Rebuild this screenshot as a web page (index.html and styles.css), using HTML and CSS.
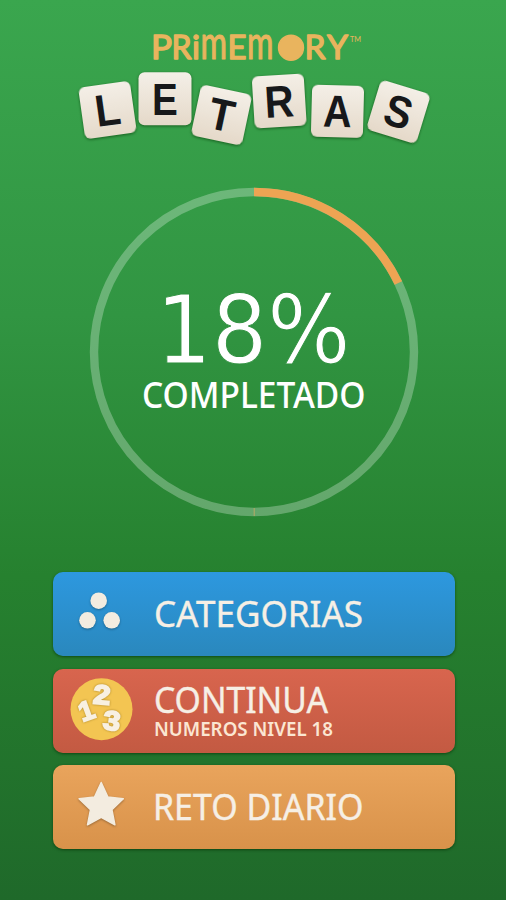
FILE: index.html
```html
<!DOCTYPE html>
<html lang="es">
<head>
<meta charset="UTF-8">
<meta name="viewport" content="width=device-width, initial-scale=1.0">
<title>Primemory Letras</title>
<link rel="stylesheet" href="styles.css">
</head>
<body>

<header class="logo">
    <svg width="506" height="150" viewBox="0 0 506 150">
        <defs>
            <linearGradient id="tile" x1="0" y1="0" x2="0" y2="1">
                <stop offset="0" stop-color="#f4efe7"/>
                <stop offset="1" stop-color="#e5d9c9"/>
            </linearGradient>
        </defs>
        <g class="brand">
            <text x="151" y="59" textLength="21" lengthAdjust="spacingAndGlyphs">P</text>
            <text x="171.5" y="59" textLength="20" lengthAdjust="spacingAndGlyphs">R</text>
            <text x="192" y="59">i</text>
            <text class="brand-m" x="200.5" y="59" textLength="26.5" lengthAdjust="spacingAndGlyphs">m</text>
            <text x="227.5" y="59" textLength="19" lengthAdjust="spacingAndGlyphs">E</text>
            <text class="brand-m" x="247" y="59" textLength="26.5" lengthAdjust="spacingAndGlyphs">m</text>
            <circle cx="291" cy="47.7" r="12.5"/>
            <text x="304.5" y="59" textLength="21" lengthAdjust="spacingAndGlyphs">R</text>
            <text x="327" y="59" textLength="21" lengthAdjust="spacingAndGlyphs">Y</text>
            <text class="brand-tm" x="350" y="41.5" textLength="11" lengthAdjust="spacingAndGlyphs">TM</text>
        </g>
        <g class="tiles">
            <g transform="translate(107.5 110) rotate(-8)">
                <rect x="-26" y="-26" width="52" height="52" rx="6"/>
                <text transform="scale(.92 1)" y="15.5">L</text>
            </g>
            <g transform="translate(165 98.7)">
                <rect x="-26.5" y="-26.5" width="53" height="53" rx="6"/>
                <text transform="scale(.86 1)" y="16.5">E</text>
            </g>
            <g transform="translate(221.5 115) rotate(12)">
                <rect x="-26" y="-26" width="52" height="52" rx="6"/>
                <text transform="scale(.92 1)" y="15.5">T</text>
            </g>
            <g transform="translate(279.2 101) rotate(-3.5)">
                <rect x="-26" y="-26" width="52" height="52" rx="6"/>
                <text transform="scale(.9 1)" y="16">R</text>
            </g>
            <g transform="translate(337.5 111.3) rotate(1.5)">
                <rect x="-26" y="-26" width="52" height="52" rx="6"/>
                <text transform="scale(.88 1)" y="15.5">A</text>
            </g>
            <g transform="translate(398.5 111.8) rotate(17)">
                <rect x="-26" y="-26" width="52" height="52" rx="6"/>
                <text transform="scale(.9 1)" y="15.5">S</text>
            </g>
        </g>
    </svg>
</header>

<div class="progress">
    <svg width="330" height="330" viewBox="0 0 330 330">
        <circle class="ring" cx="165" cy="165" r="160"/>
        <circle class="ring-value" cx="165" cy="165" r="160" pathLength="100" stroke-dasharray="17.9 100" transform="rotate(-90 165 165)"/>
        <path class="ring-mark" d="M165.2 321v8"/>
        <text class="percent" x="67" y="175.5" textLength="194.5" lengthAdjust="spacingAndGlyphs">18%</text>
        <text class="label" x="53" y="221" textLength="223.5" lengthAdjust="spacingAndGlyphs">COMPLETADO</text>
    </svg>
</div>

<nav class="menu">
    <button class="btn blue-btn">
        <svg width="402" height="84" viewBox="0 0 402 84">
            <g class="icon">
                <circle cx="45.7" cy="28.7" r="8.3"/>
                <circle cx="34.5" cy="48.3" r="8.3"/>
                <circle cx="58.7" cy="48.3" r="8.3"/>
            </g>
            <text class="btn-title" x="101" y="54.5" textLength="209" lengthAdjust="spacingAndGlyphs">CATEGORIAS</text>
        </svg>
    </button>
    <button class="btn red-btn">
        <svg width="402" height="84" viewBox="0 0 402 84">
            <circle class="badge" cx="48.5" cy="40.2" r="31"/>
            <g class="digits">
                <text transform="translate(36.5 50.5) rotate(-20)">1</text>
                <text transform="translate(48 35) rotate(5) scale(1.15 1)">2</text>
                <text transform="translate(57.5 61) rotate(8) scale(1.15 1)">3</text>
            </g>
            <text class="btn-title" x="101" y="43.5" textLength="174" lengthAdjust="spacingAndGlyphs">CONTINUA</text>
            <text class="btn-sub" x="101" y="67.2" textLength="179" lengthAdjust="spacingAndGlyphs">NUMEROS NIVEL 18</text>
        </svg>
    </button>
    <button class="btn orange-btn">
        <svg width="402" height="84" viewBox="0 0 402 84">
            <path class="icon star" d="M48.2 17.5l6.6 14.4 15.5 1.9-11.4 10.8 3 15.2-13.7-7.4-13.7 7.4 3-15.2-11.4-10.8 15.5-1.9z"/>
            <text class="btn-title" x="100" y="54.5" textLength="210.5" lengthAdjust="spacingAndGlyphs">RETO DIARIO</text>
        </svg>
    </button>
</nav>

</body>
</html>
```
FILE: styles.css
```css
html {
    background: #1f692a;
}
body {
    margin: 0;
    width: 506px;
    height: 900px;
    overflow: hidden;
    background: linear-gradient(#3aa64e, #319542 35%, #26812f 64%, #1f692a);
    font-family: "Noto Sans", sans-serif;
}
svg {
    display: block;
}
.logo {
    height: 150px;
}
.brand {
    fill: #e9b45e;
    stroke: #e9b45e;
    stroke-width: 1.4;
    stroke-linejoin: round;
    font-family: Lato, sans-serif;
    font-size: 33px;
    font-weight: 400;
}
.brand-m {
    font-size: 46px;
    stroke-width: 1.1;
}
.brand-tm {
    font-size: 8px;
    stroke: none;
}
.tiles {
    font-family: "Liberation Sans", sans-serif;
    font-size: 45px;
    font-weight: bold;
    text-anchor: middle;
    fill: #17181a;
}
.tiles rect {
    fill: url(#tile);
    filter: drop-shadow(0 1px 1.5px rgba(0, 50, 0, 0.6));
}
.progress {
    width: 330px;
    margin: 37px 0 0 88.7px;
}
.ring, .ring-value {
    fill: none;
    stroke: rgba(255, 255, 255, 0.28);
    stroke-width: 8.4;
}
.ring-value {
    stroke: #eda453;
}
.ring-mark {
    stroke: #b9a865;
    stroke-width: 1;
}
.percent {
    font-family: "DejaVu Sans", sans-serif;
    font-size: 94px;
    fill: #fff;
    stroke: #2f913f; /* thins the digits */
    stroke-width: 1;
}
.label {
    font-size: 35.5px;
    font-weight: 500;
    fill: #fff;
}
.menu {
    display: flex;
    flex-direction: column;
    gap: 12.5px;
    width: 402px;
    margin: 55px 0 0 52.5px;
}
.btn {
    display: block;
    width: 402px;
    height: 84px;
    padding: 0;
    border: none;
    border-radius: 10px;
    font-family: inherit;
    box-shadow: 0 1px 3px rgba(0, 40, 0, 0.6);
    cursor: pointer;
}
.blue-btn {
    background: linear-gradient(#2d98df, #2a88bd);
}
.red-btn {
    background: linear-gradient(#d8654e, #c35a42);
}
.orange-btn {
    background: linear-gradient(#e9a45c, #d8924a);
}
.icon {
    fill: #f3ece0;
    filter: drop-shadow(0 1px 1px rgba(0, 0, 0, 0.3));
}
.star {
    stroke: #f3ece0;
    stroke-width: 1.5;
    stroke-linejoin: round;
}
.badge {
    fill: #f3c552;
}
.digits {
    font-family: "Liberation Sans", sans-serif;
    font-size: 27px;
    font-weight: bold;
    text-anchor: middle;
    fill: #f8f0e2;
    stroke: #f8f0e2;
    stroke-width: 1.8;
    filter: drop-shadow(0 0 1px rgba(100, 70, 0, 0.5));
}
.btn-title {
    font-size: 36.5px;
    fill: #f6efe5;
    stroke: #f6efe5;
    stroke-width: 0.4;
}
.btn-sub {
    font-size: 20px;
    font-weight: 600;
    fill: #fbe6d2;
}
```
